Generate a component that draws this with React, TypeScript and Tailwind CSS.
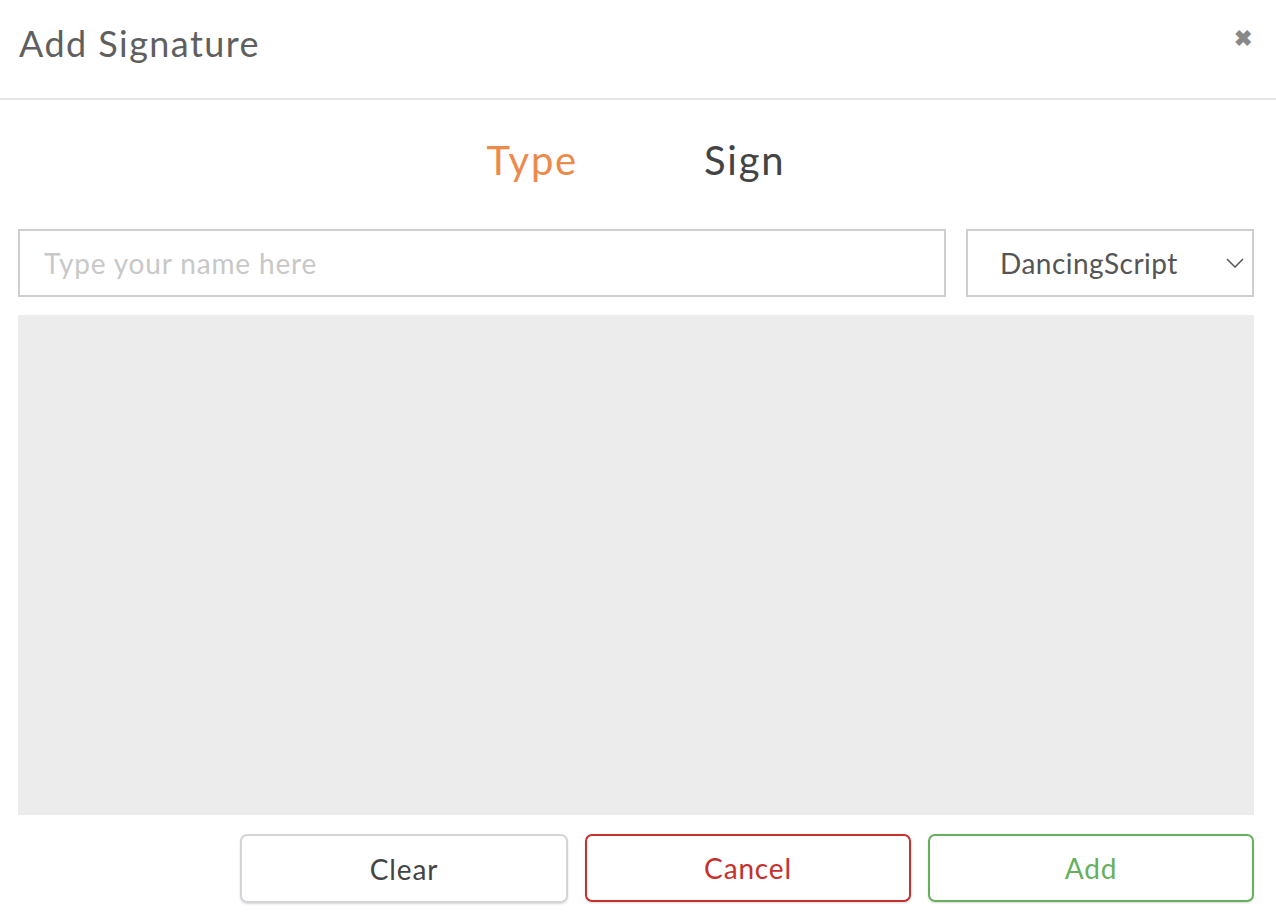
export default function App() {
  return (
    <div className="w-[1276px] h-[922px] bg-white font-['Lato',sans-serif] text-[#444] tracking-[0.03em]">
      {/* header */}
      <div className="flex h-[100px] items-start justify-between border-b-2 border-[#e6e6e6] pl-[19px] pr-[24px]">
        <h1 className="mt-[20px] text-[36px] leading-[46px] tracking-[0.04em] text-[#5f5f5f]">Add Signature</h1>
        <span className="mt-[27px] text-[22px] leading-[22px] font-bold text-[#888]">✖</span>
      </div>

      {/* tabs */}
      <div className="flex justify-center gap-[126px] pt-[33px] pr-[4px] text-[40px] leading-[54px] tracking-[0.045em]">
        <button className="text-[#ec8a4b]">Type</button>
        <button className="text-[#444]">Sign</button>
      </div>

      <div className="pl-[18px] pr-[22px]">
        <div className="mt-[42px] flex gap-[20px]">
          <input
            placeholder="Type your name here"
            className="h-[68px] flex-1 border-2 border-[#cfcfcf] px-[24px] text-[28px] tracking-[0.03em] outline-none placeholder:text-[#c8c8c8]"
          />
          <div className="flex h-[68px] w-[288px] items-center justify-between border-2 border-[#cfcfcf] pl-[32px] pr-[8px] text-[28px] text-[#555]">
            <span>DancingScript</span>
            <svg width="18" height="10" viewBox="0 0 18 10" fill="none" stroke="#555" strokeWidth="1.5">
              <polyline points="1,1 9,9 17,1" />
            </svg>
          </div>
        </div>

        <div className="mt-[18px] h-[500px] bg-[#ececec]" />

        <div className="mt-[19px] flex justify-end gap-[17px]">
          <button className="h-[69px] w-[328px] rounded-[7px] border-2 border-[#d4d4d8] text-[28px] tracking-[0.03em] text-[#444] shadow-[0_1px_2px_rgba(0,0,0,0.15)]">
            Clear
          </button>
          <button className="h-[68px] w-[326px] rounded-[7px] border-2 border-[#c7302c] text-[28px] tracking-[0.03em] text-[#c7302c] shadow-[0_1px_2px_rgba(0,0,0,0.15)]">
            Cancel
          </button>
          <button className="h-[68px] w-[326px] rounded-[7px] border-2 border-[#66b05d] text-[28px] tracking-[0.03em] text-[#66b05d] shadow-[0_1px_2px_rgba(0,0,0,0.15)]">
            Add
          </button>
        </div>
      </div>
    </div>
  );
}
